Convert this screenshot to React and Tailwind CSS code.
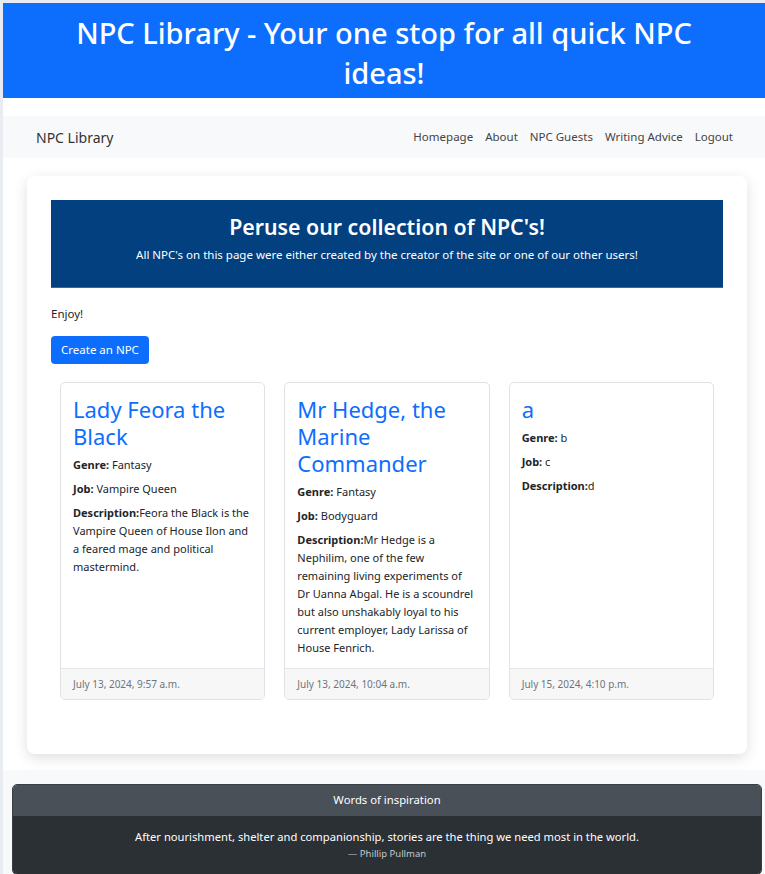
import React from 'react';

const npcs = [
    {
        name: 'Lady Feora the Black',
        genre: 'Fantasy',
        job: 'Vampire Queen',
        description: 'Feora the Black is the Vampire Queen of House Ilon and a feared mage and political mastermind.',
        created: 'July 13, 2024, 9:57 a.m.',
    },
    {
        name: 'Mr Hedge, the Marine Commander',
        genre: 'Fantasy',
        job: 'Bodyguard',
        description: 'Mr Hedge is a Nephilim, one of the few remaining living experiments of Dr Uanna Abgal. He is a scoundrel but also unshakably loyal to his current employer, Lady Larissa of House Fenrich.',
        created: 'July 13, 2024, 10:04 a.m.',
    },
    {
        name: 'a',
        genre: 'b',
        job: 'c',
        description: 'd',
        created: 'July 15, 2024, 4:10 p.m.',
    },
];

const NpcCard = ({ npc }) => (
    <div className="flex flex-col border border-[#dfe2e6] rounded-[5px] bg-white overflow-hidden">
        <div className="flex-1 px-[12px] pt-[13px] pb-[10px] text-[11px] leading-[18px]">
            <h2 className="text-[#0d6efd] text-[22px] leading-[27px] mb-[6px]">{npc.name}</h2>
            <p className="mb-[6px]"><strong className="font-bold">Genre:</strong> {npc.genre}</p>
            <p className="mb-[6px]"><strong className="font-bold">Job:</strong> {npc.job}</p>
            <p><strong className="font-bold">Description:</strong>{npc.description}</p>
        </div>
        <div className="h-[31px] flex items-center px-[12px] bg-[#f7f7f7] border-t border-[#e4e6e9] text-[10px] text-[#6c757d]">
            {npc.created}
        </div>
    </div>
);

export default function App() {
    return (
        <div className="min-h-screen bg-[#e8ecf1] pl-[3px] pt-[3px] font-['Noto_Sans',sans-serif] text-[#212529]">
            <div className="bg-white">
                <header className="bg-[#0d6efd] text-white text-center pt-[10px] pb-[5px]">
                    <h1 className="text-[29px] leading-[40px] font-medium">
                        NPC Library - Your one stop for all quick NPC<br />ideas!
                    </h1>
                </header>

                <nav className="mt-[18px] h-[42px] bg-[#f8f9fa] flex items-center justify-between pl-[33px] pr-[32px]">
                    <span className="text-[14px] text-[#333]">NPC Library</span>
                    <ul className="flex gap-[12px] text-[11.5px] text-[#444]">
                        <li>Homepage</li>
                        <li>About</li>
                        <li>NPC Guests</li>
                        <li>Writing Advice</li>
                        <li>Logout</li>
                    </ul>
                </nav>

                <div className="pt-[18px] pb-[16px]">
                    <main className="ml-[24px] w-[720px] bg-white rounded-[8px] shadow-[0_4px_14px_rgba(0,0,0,0.13)] p-[24px] pb-[54px]">
                        <section className="bg-[#02407f] border-b border-[#3c6696] h-[88px] text-white text-center pt-[12px]">
                            <h2 className="text-[21.3px] leading-[30px] font-semibold">Peruse our collection of NPC's!</h2>
                            <p className="text-[11.5px] leading-[16px] mt-[5px]">All NPC's on this page were either created by the creator of the site or one of our other users!</p>
                        </section>

                        <p className="text-[11.5px] leading-[18px] mt-[17px]">Enjoy!</p>
                        <button className="mt-[13px] h-[28px] px-[10px] rounded-[4px] bg-[#0d6efd] text-white text-[11.5px]">Create an NPC</button>

                        <div className="mt-[18px] px-[9px] grid grid-cols-3 gap-[19px] h-[318px]">
                            {npcs.map((npc) => <NpcCard key={npc.name} npc={npc} />)}
                        </div>
                    </main>
                </div>

                <footer className="bg-[#f8f9fa] pt-[14px] pl-[9px] pr-[3px]">
                    <div className="rounded-[5px] overflow-hidden border border-[#3a3f44] text-white text-center">
                        <div className="h-[31px] bg-[#4a5058] flex items-center justify-center text-[11.3px]">Words of inspiration</div>
                        <div className="bg-[#2b3035] pt-[12px] pb-[12px]">
                            <p className="text-[11.2px] leading-[18px]">After nourishment, shelter and companionship, stories are the thing we need most in the world.</p>
                            <p className="text-[9.5px] leading-[16px] text-[#c6c8ca]">— Phillip Pullman</p>
                        </div>
                    </div>
                </footer>
            </div>
        </div>
    );
}
